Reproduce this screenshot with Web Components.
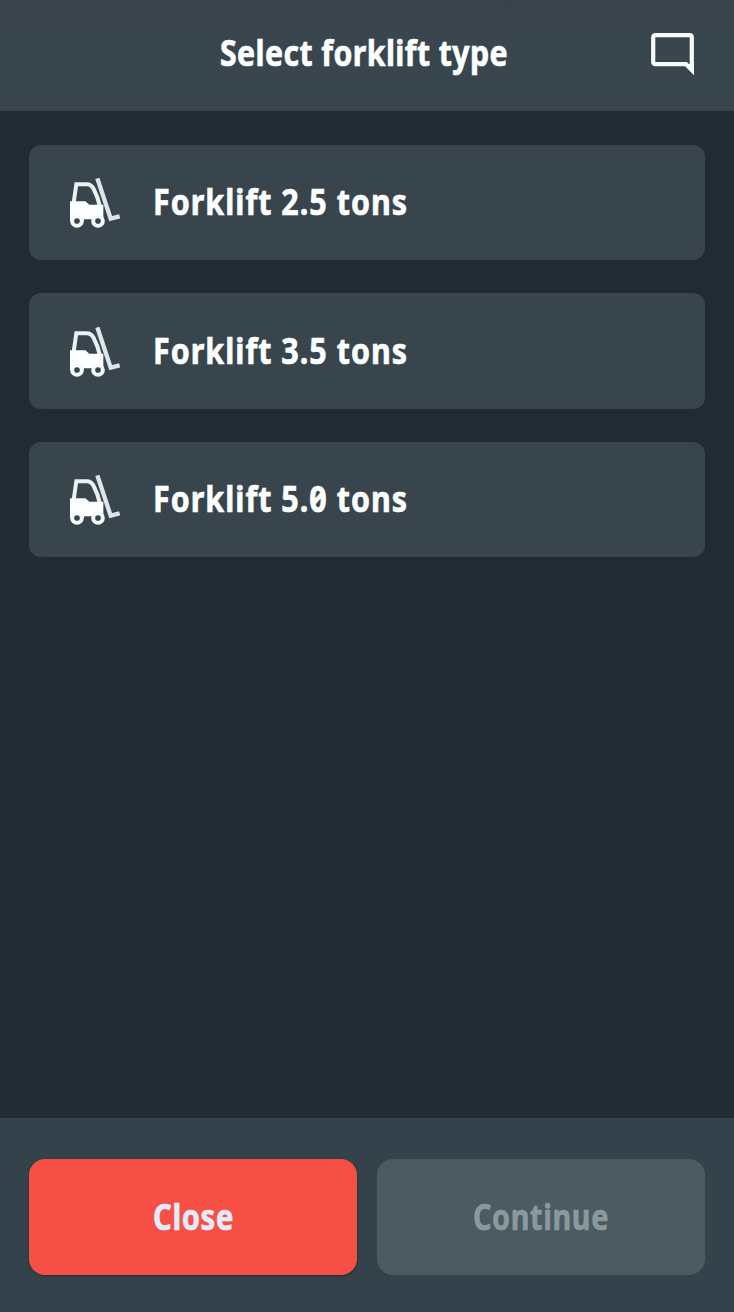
<!DOCTYPE html>
<html lang="en">
<head>
<meta charset="utf-8">
<meta name="viewport" content="width=device-width, initial-scale=1">
<title>Select forklift type</title>
<style>
  html, body { height: 100%; }
  body {
    margin: 0;
    background: #212b33;
    color: #fcffff;
    font-family: "Noto Sans", "Open Sans", sans-serif;
    font-weight: 700;
  }
</style>
</head>
<body>
<forklift-screen>
  <screen-header slot="header">
    <condensed-text width="288" label="Select forklift type"></condensed-text>
  </screen-header>
  <type-card><condensed-text width="255" spacing="1.2" label="Forklift 2.5 tons"></condensed-text></type-card>
  <type-card><condensed-text width="255" spacing="1.2" label="Forklift 3.5 tons"></condensed-text></type-card>
  <type-card><condensed-text width="255" spacing="1.2" label="Forklift 5.0 tons"></condensed-text></type-card>
  <action-button slot="footer" variant="danger"><condensed-text width="81" spacing="0.8" label="Close"></condensed-text></action-button>
  <action-button slot="footer" disabled><condensed-text width="136" spacing="0.8" label="Continue"></condensed-text></action-button>
</forklift-screen>

<script>
  class BaseElement extends HTMLElement {
    constructor() {
      super();
      const template = document.createElement('template');
      template.innerHTML = this.constructor.markup;
      this.attachShadow({ mode: 'open' }).appendChild(template.content.cloneNode(true));
    }
  }

  // Bold label squeezed to a given width
  class CondensedText extends BaseElement {
    static markup = `
      <style>
        :host { display: block; height: 52px; }
        svg { display: block; overflow: visible; }
        text {
          fill: currentColor;
          stroke: currentColor;
          stroke-width: 0.7px;
          font-size: 36.5px;
          font-feature-settings: "zero";
        }
      </style>
      <svg height="52"><text x="0" y="38.6" lengthAdjust="spacingAndGlyphs"></text></svg>
    `;

    connectedCallback() {
      const width = this.getAttribute('width');
      const text = this.shadowRoot.querySelector('text');
      this.shadowRoot.querySelector('svg').setAttribute('width', width);
      text.setAttribute('textLength', width);
      text.style.letterSpacing = `${this.getAttribute('spacing') || 0.5}px`;
      text.textContent = this.getAttribute('label');
    }
  }

  class ForkliftScreen extends BaseElement {
    static markup = `
      <style>
        :host {
          display: grid;
          grid-template-rows: 111px 1fr 194.5px;
          height: 100vh;
          overflow: hidden;
        }
        main {
          display: flex;
          flex-direction: column;
          gap: 33px;
          padding: 33.5px 29px;
        }
        footer {
          display: grid;
          grid-template-columns: 1fr 1fr;
          gap: 20px;
          align-items: start;
          padding: 41.5px 29px 0;
          background: #34434b;
        }
      </style>
      <slot name="header"></slot>
      <main><slot></slot></main>
      <footer><slot name="footer"></slot></footer>
    `;
  }

  class ScreenHeader extends BaseElement {
    static markup = `
      <style>
        :host {
          display: grid;
          grid-template-columns: 1fr auto 1fr;
          align-items: start;
          box-sizing: border-box;
          padding: 27px 40.5px 0 35px;
          background: linear-gradient(#38434a, #3a464e 40px, #39454d);
        }
        .chat { grid-column: 3; justify-self: end; margin-top: 5.5px; }
        ::slotted(*) { grid-column: 2; }
        svg { display: block; }
      </style>
      <slot></slot>
      <svg class="chat" width="43" height="42" viewBox="0 0 43 42" fill="none">
        <path d="M4.5 2.2H38.5Q40.8 2.2 40.8 4.5V37L35 31.2H4.5Q2.2 31.2 2.2 28.9V4.5Q2.2 2.2 4.5 2.2Z" stroke="#f5fbfc" stroke-width="4.2"/>
        <path d="M34 31H43V42Z" fill="#f5fbfc"/>
      </svg>
    `;
  }

  class TypeCard extends BaseElement {
    static markup = `
      <style>
        :host {
          display: flex;
          align-items: start;
          gap: 32.5px;
          box-sizing: border-box;
          height: 115.5px;
          padding: 31.5px 41px 0;
          border-radius: 12px;
          background: #39454d;
        }
        svg { display: block; flex: none; margin-top: 2px; }
      </style>
      <svg width="50" height="50" viewBox="0 0 150 150" fill="none">
        <path d="M11 74L19 19H50Q64 19 71 33Q84 58 90 86" stroke="#e9f1f3" stroke-width="12"/>
        <path d="M82 1L122 122L149 115" stroke="#dce5e7" stroke-width="13"/>
        <path d="M0 70H46L58 80H100V129H82V124H42V129H0Z" fill="#fcffff"/>
        <circle cx="21" cy="129" r="14.5" fill="#39454d" stroke="#f5fafb" stroke-width="12"/>
        <circle cx="84" cy="129" r="14.5" fill="#39454d" stroke="#f5fafb" stroke-width="12"/>
      </svg>
      <slot></slot>
    `;
  }

  class ActionButton extends BaseElement {
    static markup = `
      <style>
        :host { display: block; }
        button {
          display: flex;
          justify-content: center;
          align-items: start;
          box-sizing: border-box;
          width: 100%;
          height: 115.5px;
          padding: 31.5px 0 0;
          border: 0;
          border-radius: 16px;
          background: #4c5a61;
          color: #8b999d;
          font: inherit;
        }
        :host([variant="danger"]) button {
          background: #f65046;
          color: #e1ebfa;
          box-shadow: 0 1px 3px rgba(0, 0, 0, 0.35);
        }
      </style>
      <button type="button"><slot></slot></button>
    `;

    connectedCallback() {
      this.shadowRoot.querySelector('button').disabled = this.hasAttribute('disabled');
    }
  }

  customElements.define('condensed-text', CondensedText);
  customElements.define('forklift-screen', ForkliftScreen);
  customElements.define('screen-header', ScreenHeader);
  customElements.define('type-card', TypeCard);
  customElements.define('action-button', ActionButton);
</script>
</body>
</html>
